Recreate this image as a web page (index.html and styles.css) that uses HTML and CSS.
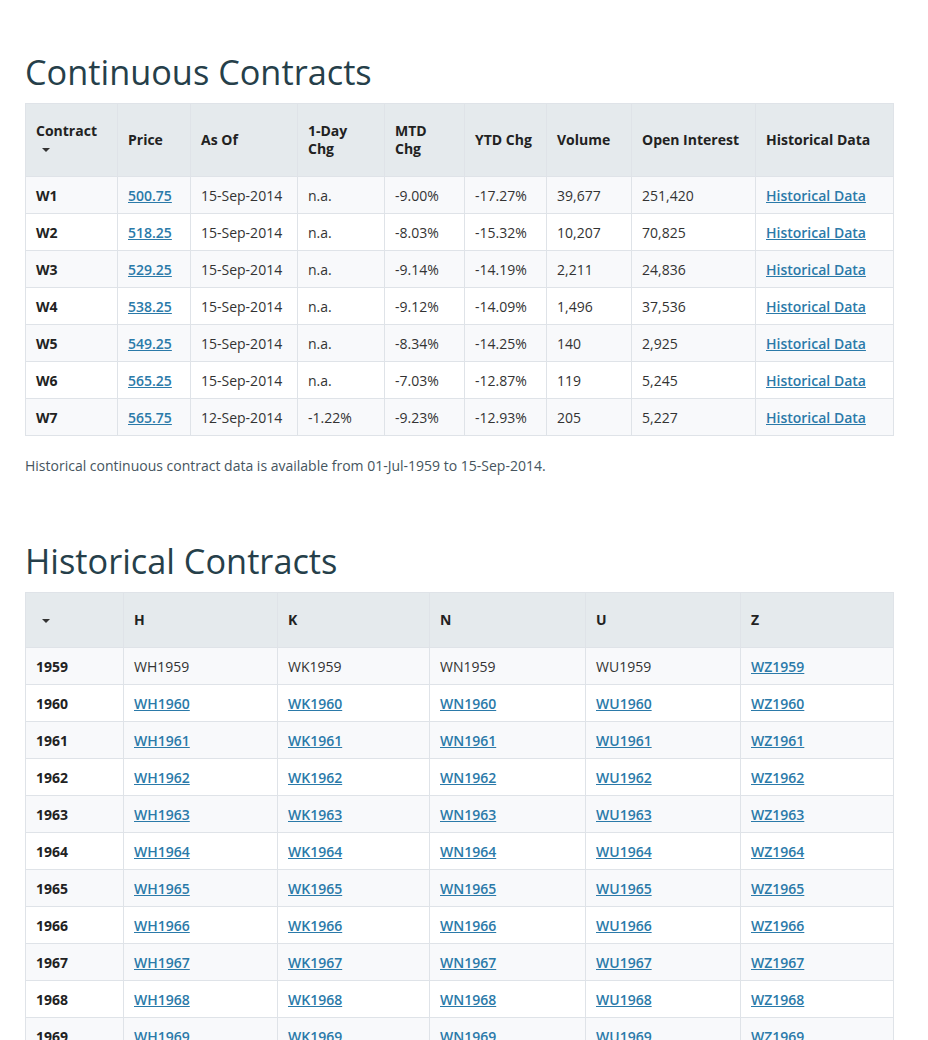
FILE: index.html
```html
<!DOCTYPE html>
<html lang="en">
<head>
<meta charset="utf-8">
<title>Contracts</title>
<link rel="stylesheet" href="styles.css">
</head>
<body>
<main class="page">
  <section class="section">
    <h1 class="title">Continuous Contracts</h1>
    <table class="data cont">
      <colgroup>
        <col class="c1"><col class="c2"><col class="c3"><col class="c4"><col class="c5"><col class="c6"><col class="c7"><col class="c8"><col class="c9">
      </colgroup>
      <thead>
        <tr>
          <th>Contract<br><span class="caret"></span></th>
          <th>Price</th>
          <th>As Of</th>
          <th>1-Day<br>Chg</th>
          <th>MTD<br>Chg</th>
          <th>YTD Chg</th>
          <th>Volume</th>
          <th>Open Interest</th>
          <th>Historical Data</th>
        </tr>
      </thead>
      <tbody>
        <tr><td class="b">W1</td><td><a href="#">500.75</a></td><td>15-Sep-2014</td><td>n.a.</td><td>-9.00%</td><td>-17.27%</td><td>39,677</td><td>251,420</td><td><a href="#">Historical Data</a></td></tr>
        <tr><td class="b">W2</td><td><a href="#">518.25</a></td><td>15-Sep-2014</td><td>n.a.</td><td>-8.03%</td><td>-15.32%</td><td>10,207</td><td>70,825</td><td><a href="#">Historical Data</a></td></tr>
        <tr><td class="b">W3</td><td><a href="#">529.25</a></td><td>15-Sep-2014</td><td>n.a.</td><td>-9.14%</td><td>-14.19%</td><td>2,211</td><td>24,836</td><td><a href="#">Historical Data</a></td></tr>
        <tr><td class="b">W4</td><td><a href="#">538.25</a></td><td>15-Sep-2014</td><td>n.a.</td><td>-9.12%</td><td>-14.09%</td><td>1,496</td><td>37,536</td><td><a href="#">Historical Data</a></td></tr>
        <tr><td class="b">W5</td><td><a href="#">549.25</a></td><td>15-Sep-2014</td><td>n.a.</td><td>-8.34%</td><td>-14.25%</td><td>140</td><td>2,925</td><td><a href="#">Historical Data</a></td></tr>
        <tr><td class="b">W6</td><td><a href="#">565.25</a></td><td>15-Sep-2014</td><td>n.a.</td><td>-7.03%</td><td>-12.87%</td><td>119</td><td>5,245</td><td><a href="#">Historical Data</a></td></tr>
        <tr><td class="b">W7</td><td><a href="#">565.75</a></td><td>12-Sep-2014</td><td>-1.22%</td><td>-9.23%</td><td>-12.93%</td><td>205</td><td>5,227</td><td><a href="#">Historical Data</a></td></tr>
      </tbody>
    </table>
    <p class="note">Historical continuous contract data is available from 01-Jul-1959 to 15-Sep-2014.</p>
  </section>

  <section class="section second">
    <h1 class="title">Historical Contracts</h1>
    <table class="data hist">
      <colgroup>
        <col class="h1c"><col class="h2c"><col class="h3c"><col class="h4c"><col class="h5c"><col class="h6c">
      </colgroup>
      <thead>
        <tr><th><span class="caret"></span></th><th>H</th><th>K</th><th>N</th><th>U</th><th>Z</th></tr>
      </thead>
      <tbody>
        <tr><td class="b">1959</td><td>WH1959</td><td>WK1959</td><td>WN1959</td><td>WU1959</td><td><a href="#">WZ1959</a></td></tr>
        <tr><td class="b">1960</td><td><a href="#">WH1960</a></td><td><a href="#">WK1960</a></td><td><a href="#">WN1960</a></td><td><a href="#">WU1960</a></td><td><a href="#">WZ1960</a></td></tr>
        <tr><td class="b">1961</td><td><a href="#">WH1961</a></td><td><a href="#">WK1961</a></td><td><a href="#">WN1961</a></td><td><a href="#">WU1961</a></td><td><a href="#">WZ1961</a></td></tr>
        <tr><td class="b">1962</td><td><a href="#">WH1962</a></td><td><a href="#">WK1962</a></td><td><a href="#">WN1962</a></td><td><a href="#">WU1962</a></td><td><a href="#">WZ1962</a></td></tr>
        <tr><td class="b">1963</td><td><a href="#">WH1963</a></td><td><a href="#">WK1963</a></td><td><a href="#">WN1963</a></td><td><a href="#">WU1963</a></td><td><a href="#">WZ1963</a></td></tr>
        <tr><td class="b">1964</td><td><a href="#">WH1964</a></td><td><a href="#">WK1964</a></td><td><a href="#">WN1964</a></td><td><a href="#">WU1964</a></td><td><a href="#">WZ1964</a></td></tr>
        <tr><td class="b">1965</td><td><a href="#">WH1965</a></td><td><a href="#">WK1965</a></td><td><a href="#">WN1965</a></td><td><a href="#">WU1965</a></td><td><a href="#">WZ1965</a></td></tr>
        <tr><td class="b">1966</td><td><a href="#">WH1966</a></td><td><a href="#">WK1966</a></td><td><a href="#">WN1966</a></td><td><a href="#">WU1966</a></td><td><a href="#">WZ1966</a></td></tr>
        <tr><td class="b">1967</td><td><a href="#">WH1967</a></td><td><a href="#">WK1967</a></td><td><a href="#">WN1967</a></td><td><a href="#">WU1967</a></td><td><a href="#">WZ1967</a></td></tr>
        <tr><td class="b">1968</td><td><a href="#">WH1968</a></td><td><a href="#">WK1968</a></td><td><a href="#">WN1968</a></td><td><a href="#">WU1968</a></td><td><a href="#">WZ1968</a></td></tr>
        <tr><td class="b">1969</td><td><a href="#">WH1969</a></td><td><a href="#">WK1969</a></td><td><a href="#">WN1969</a></td><td><a href="#">WU1969</a></td><td><a href="#">WZ1969</a></td></tr>
        <tr><td class="b">1970</td><td><a href="#">WH1970</a></td><td><a href="#">WK1970</a></td><td><a href="#">WN1970</a></td><td><a href="#">WU1970</a></td><td><a href="#">WZ1970</a></td></tr>
        <tr><td class="b">1971</td><td><a href="#">WH1971</a></td><td><a href="#">WK1971</a></td><td><a href="#">WN1971</a></td><td><a href="#">WU1971</a></td><td><a href="#">WZ1971</a></td></tr>
      </tbody>
    </table>
  </section>
</main>
</body>
</html>
```

FILE: styles.css
```css
* { box-sizing: border-box; }
html, body { margin: 0; padding: 0; background: #fff; }
body {
  font-family: "Open Sans", "Liberation Sans", sans-serif;
  font-size: 14px;
  line-height: 20px;
  color: #333;
}
.page {
  padding: 51px 35px 0 25px;
}
.title {
  margin: 0 0 11px;
  font-size: 34.3px;
  line-height: 41px;
  font-weight: 400;
  color: #263f4a;
}
.second { margin-top: 64px; }
.data {
  width: 868px;
  table-layout: fixed;
  border-collapse: collapse;
  border: 1px solid #dbe0e5;
}
.data th, .data td {
  border: 1px solid #dfe3e8;
  text-align: left;
  vertical-align: middle;
  padding: 9px 10px 7px;
}
.data th {
  background: #e5eaed;
  color: #222;
  font-weight: 700;
  line-height: 18px;
  padding-top: 18px;
  padding-bottom: 18px;
}
.data tbody tr:nth-child(odd) td { background: #f8f9fb; }
.data tbody tr:nth-child(even) td { background: #fff; }
.data td { color: #333; }
.data td.b { font-weight: 700; color: #222; }
.data a { color: #2b7aa9; text-decoration: underline; font-weight: 600; }
.caret {
  display: inline-block;
  width: 0; height: 0;
  margin-left: 6px;
  border-left: 4px solid transparent;
  border-right: 4px solid transparent;
  border-top: 4px solid #333;
  vertical-align: middle;
}
.c1 { width: 92px; } .c2 { width: 73px; } .c3 { width: 107px; }
.c4 { width: 87px; } .c5 { width: 80px; } .c6 { width: 82px; }
.c7 { width: 85px; } .c8 { width: 124px; } .c9 { width: 138px; }
.h1c { width: 98px; } .h2c { width: 154px; } .h3c { width: 152px; }
.h4c { width: 156px; } .h5c { width: 155px; } .h6c { width: 153px; }
.note {
  margin: 20px 0 0;
  color: #46555e;
}
```
